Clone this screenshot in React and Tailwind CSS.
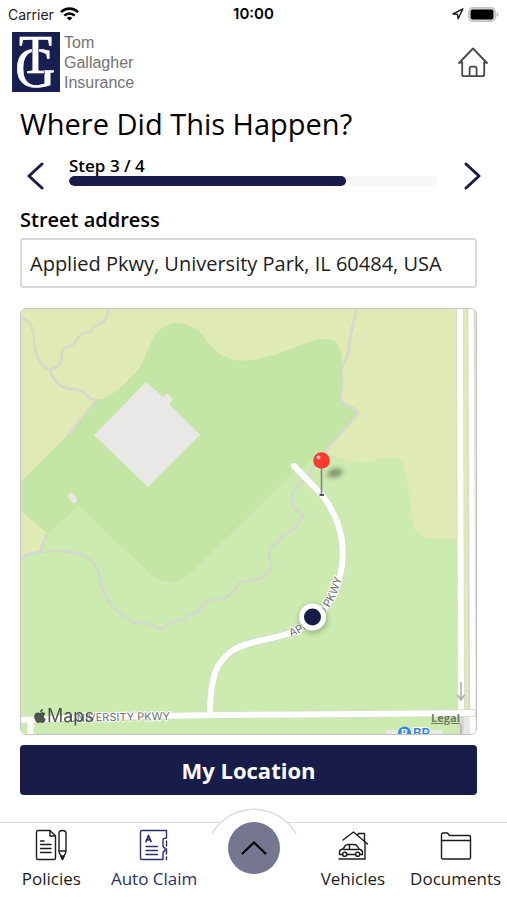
import {useState} from 'react';
import {FaApple} from 'react-icons/fa';

const TRAILS = [
  'M22 317 Q33 324 34 336 Q33 352 41 363 Q45 369 50 370 Q54 381 60 385 Q66 389 80 390 Q87 394 89 398 L96 400 L67 437',
  'M108 308 Q109 320 100 324 Q94 325 90 332 Q80 333 78 338 Q74 345 70 346 Q61 348 62 353 Q63 366 50 370',
  'M357 308 L354 320 L352 328 L350 340 L348 354 L341 370 Q344 385 340 399 Q343 405 353 408 Q361 413 354 418 L326 450 L312 470 Q296 487 293 493 Q289 505 297 511 Q305 514 302 519 Q292 532 283 535 Q279 544 272 546 Q267 550 270 560 Q273 568 264 576 Q257 581 242 581 Q238 583 235 589 Q230 598 222 599 Q208 600 205 603 L199 611 Q195 615 189 615 Q185 620 180 620 Q170 621 166 626 Q160 631 154 626 Q148 623 135 623 Q122 617 112 606 Q102 595 100 578 Q98 564 86 557 Q72 550 55 551 Q30 551 22 558',
  'M40 551 L47 534',
];

const APPLIED_PKWY = 'M294 466 L322 495 C347 528 348 562 333 596 C321 618 306 629 287 634 C268 640 250 641 235 649 C216 660 210 678 210 715';

export default function App() {
  return (
    <div className="flex min-h-screen flex-col bg-white font-['Open_Sans',sans-serif] text-black">
      <StatusBar />
      <Header />
      <main className="flex flex-col pr-[30px] pl-5">
        <h1 className="mt-3 text-[29px] leading-10">Where Did This Happen?</h1>
        <StepProgress step={3} total={4} />
        <AddressField />
        <LocationMap />
        <button type="button" className="mt-2.5 h-[50px] rounded bg-[#171c48] text-[22px] font-bold text-white">
          My Location
        </button>
      </main>
      <TabBar />
    </div>
  );
}

function StatusBar() {
  return (
    <div className="grid h-7 grid-cols-3 items-center px-2 font-['Inter',sans-serif] text-[14px]">
      <div className="flex items-center gap-1.5 text-[#222]">
        <span>Carrier</span>
        <svg viewBox="0 0 19 14" className="h-3.5 w-[19px]" fill="none" stroke="#000" strokeWidth="2.6">
          <path d="M1 5.2 C5.8 0.4 13.2 0.4 18 5.2" />
          <path d="M4.3 8.6 C7.3 5.7 11.7 5.7 14.7 8.6" />
          <path d="M9.5 13.6 L6.8 10.9 Q9.5 8.8 12.2 10.9 Z" fill="#000" stroke="none" />
        </svg>
      </div>
      <span className="text-center text-[15px] font-semibold">10:00</span>
      <div className="flex items-center justify-end gap-1">
        <svg viewBox="0 0 12 12" className="h-3 w-3" fill="none" stroke="#222" strokeWidth="1.5" strokeLinejoin="round">
          <path d="M10.8 1 L1 5.9 L5.4 6.3 L6.2 10.8 Z" />
        </svg>
        <svg viewBox="0 0 31 15" className="h-[15px] w-[31px]">
          <rect x="0.8" y="0.8" width="26.4" height="13.4" rx="4" fill="#d8d8d8" stroke="#c4c4c4" strokeWidth="1.6" />
          <rect x="2.6" y="2.6" width="22.8" height="9.8" rx="2" fill="#000" />
          <path d="M28.6 5 Q30.4 6 30.4 7.5 Q30.4 9 28.6 10 Z" fill="#b9b9b9" />
        </svg>
      </div>
    </div>
  );
}

function Header() {
  return (
    <header className="flex h-16 items-start justify-between pt-1 pr-[18px] pl-3">
      <div className="flex items-start gap-1">
        <svg viewBox="0 0 48 60" className="h-[60px] w-12 overflow-visible" fontFamily="Liberation Serif, serif" fill="#fff">
          <rect width="48" height="60" fill="#171f50" />
          <text x="3" y="55" fontSize="56" stroke="#fff" strokeWidth="0.5">G</text>
          <text x="7" y="41" fontSize="54" stroke="#171f50" strokeWidth="2" paintOrder="stroke">T</text>
          <text x="7" y="41" fontSize="54" stroke="#fff" strokeWidth="0.6">T</text>
        </svg>
        <p className="w-20 pt-px font-['Liberation_Sans',sans-serif] text-[16px] leading-5 text-[#737373]">
          Tom Gallagher Insurance
        </p>
      </div>
      <button type="button" aria-label="Home" className="mt-3.5">
        <svg viewBox="0 0 32 32" className="h-8 w-8" fill="none" stroke="#484848" strokeWidth="1.8" strokeLinecap="round" strokeLinejoin="round">
          <path d="M2 17 L16 2.5 L30 17 L27.2 16.2 V28.5 Q27.2 30.2 25.5 30.2 H7 Q5.2 30.2 5.2 28.5 V16.2 Z" />
          <path d="M12.6 30 V22.5 Q12.6 20.6 14.4 20.6 H17.8 Q19.6 20.6 19.6 22.5 V30" />
        </svg>
      </button>
    </header>
  );
}

function StepProgress({step, total}) {
  return (
    <div className="mt-3 -mr-2 flex items-end justify-between">
      <button type="button" aria-label="Previous step" className="pl-1.5">
        <Chevron d="M16 2 L3 14 L16 26" />
      </button>
      <div className="mx-[25px] flex flex-1 flex-col pb-1">
        <span id="step-label" className="text-[17px] leading-5 font-semibold">
          Step {step} / {total}
        </span>
        <div
          role="progressbar"
          aria-labelledby="step-label"
          aria-valuenow={step}
          aria-valuemax={total}
          className="h-2.5 overflow-hidden rounded-full bg-[#f7f7f8]"
        >
          <div className="h-full rounded-full bg-[#171c48]" style={{width: `${(step / total) * 100}%`}} />
        </div>
      </div>
      <button type="button" aria-label="Next step" className="pr-1">
        <Chevron d="M3 2 L16 14 L3 26" />
      </button>
    </div>
  );
}

function Chevron({d}) {
  return (
    <svg viewBox="0 0 18 28" className="h-7 w-[18px]" fill="none" stroke="#171c48" strokeWidth="3" strokeLinecap="round" strokeLinejoin="round">
      <path d={d} />
    </svg>
  );
}

function AddressField() {
  const [address, setAddress] = useState('Applied Pkwy, University Park, IL 60484, USA');

  return (
    <div className="mt-4 flex flex-col">
      <label htmlFor="street-address" className="text-[20px] leading-7 font-semibold">
        Street address
      </label>
      <input
        id="street-address"
        type="text"
        value={address}
        onChange={(e) => setAddress(e.target.value)}
        className="mt-1 h-[50px] rounded-[3px] border-2 border-[#dadada] px-2 text-[20px] text-[#1c1c1c]"
      />
    </div>
  );
}

function LocationMap() {
  return (
    <div className="relative mt-5 overflow-hidden rounded-md border border-[#c4c4c4]">
      <svg viewBox="21 309 455 425" className="block w-full" fill="none">
        <defs>
          <path id="pkwy-label" d="M291 637 C311 629 326 615 332 603 C337 594 340 585 344 572" />
          <filter id="soft" x="-50%" y="-80%" width="200%" height="260%">
            <feGaussianBlur stdDeviation="2.5" />
          </filter>
        </defs>

        <rect x="20" y="305" width="460" height="435" fill="#e0eab5" />
        <path
          d="M20 558 L40 551 L48 534 L80 506 L200 440 L326 451 C338 462 362 464 376 460 C393 456 402 457 404 466 C408 482 410 500 412 520 C414 534 424 539 436 539 H461 V740 H20 Z"
          fill="#cdebb0"
        />
        <path
          d="M20 483 L65 438 L97 400 C115 397 128 379 139 369 C148 355 152 323 177 323 C201 325 204 339 215 350 C227 362 249 363 265 357 C291 352 307 339 326 339 C339 339 344 351 341 370 Q344 385 340 399 L357 413 L326 451 L290 476 L194 570 Q171 592 149 573 L79 506 L48 534 L20 510 Z"
          fill="#c3e6a4"
        />
        <path d="M79 506 L64 520 L48 534 L80 540 L100 526 Z" fill="#cdebb0" />
        <path d="M146 382 L163 397 L167 393 L173 399 L169 404 L200 435 L148 487 L94 435 Z" fill="#e8e8e7" />
        <path d="M71 496 L74 500" stroke="#e8e8e7" strokeWidth="6" strokeLinecap="round" />

        {TRAILS.map((d) => (
          <g key={d}>
            <path d={d} stroke="#c9cdc1" strokeWidth="2.2" />
            <path d={d} stroke="#dcdcd8" strokeWidth="1.3" />
          </g>
        ))}

        <path d="M460 305 L461 740" stroke="#d5dacb" strokeWidth="7.5" />
        <path d="M471 305 L472 740" stroke="#d5dacb" strokeWidth="7.5" />
        <rect x="464" y="712" width="8" height="26" fill="#e6e6e2" />
        <path d="M460 305 L461 716" stroke="#fff" strokeWidth="6" />
        <path d="M471 305 L473 740" stroke="#fff" strokeWidth="5.5" />
        <path d="M461 724 V740" stroke="#a9a9a4" strokeWidth="1.2" />

        <path d={APPLIED_PKWY} stroke="#d3ddc5" strokeWidth="7.5" />
        <path d="M20 720 Q130 715 300 714.500 L477 713" stroke="#d3ddc5" strokeWidth="7.5" />
        <path d={APPLIED_PKWY} stroke="#fff" strokeWidth="6" strokeLinecap="round" />
        <path d="M20 720 Q130 715 300 714.500 L475 713 M30.500 720 V740" stroke="#fff" strokeWidth="6" />
        <path d="M461 682 V698 M457.500 695 L461 700 L464.500 695" stroke="#a8a8a8" strokeWidth="1.5" />

        <g fontFamily="Inter, sans-serif" fontSize="11" fill="#6d6d6d" stroke="#fff" strokeWidth="2" paintOrder="stroke">
          <text x="170" y="720" textAnchor="end" transform="rotate(-1 170 720)">
            UNIVERSITY PKWY
          </text>
          <text>
            <textPath href="#pkwy-label">APPLIED PKWY</textPath>
          </text>
        </g>

        <rect x="386" y="730" width="57" height="10" rx="2" fill="#e9e9e4" />
        <circle cx="404.500" cy="733" r="6.500" fill="#2f86e8" />
        <text x="401" y="737" fontFamily="Inter, sans-serif" fontSize="10" fontWeight="700" fill="#fff">P</text>
        <text x="413" y="738" fontFamily="Inter, sans-serif" fontSize="13" fontWeight="600" fill="#2f86e8" stroke="#fff" strokeWidth="2" paintOrder="stroke">
          BP
        </text>

        <ellipse cx="335" cy="473" rx="8" ry="4" transform="rotate(-12 335 473)" fill="#5f7050" opacity="0.75" filter="url(#soft)" />
        <path d="M321.500 468 V494" stroke="#85858a" strokeWidth="1.6" />
        <path d="M319.500 495 H324" stroke="#55555c" strokeWidth="2" />
        <circle cx="321.500" cy="460.500" r="8.300" fill="#fc3b30" />
        <circle cx="318.500" cy="457.500" r="2" fill="#ffc4be" />

        <circle cx="313" cy="619" r="15" fill="#5f7a4a" opacity="0.4" filter="url(#soft)" />
        <circle cx="312.500" cy="617" r="13.500" fill="#fff" />
        <circle cx="312.500" cy="617" r="8.500" fill="#171c48" />
      </svg>

      <div className="absolute bottom-1.5 left-3 flex items-center font-['Inter',sans-serif] text-[18px] leading-6 text-[#3c463a] opacity-90">
        <FaApple className="h-4 w-3.5" />
        <span>Maps</span>
      </div>
      <a href="#legal" className="absolute right-4 bottom-2 text-[11px] font-bold text-[#6f7b66] underline">
        Legal
      </a>
    </div>
  );
}

function TabBar() {
  return (
    <nav className="relative mt-auto grid h-[78px] grid-cols-[1fr_1fr_96px_1fr_1fr] border-t border-[#dcdcdc] bg-white">
      <Tab label="Policies" icon={<PoliciesIcon />} />
      <Tab label="Auto Claim" icon={<AutoClaimIcon />} active />
      <div className="relative flex justify-center">
        <svg viewBox="0 0 88 40" className="absolute -top-[15px] h-10 w-[88px]" fill="none">
          <path d="M2 26 A48 48 0 0 1 86 26 V40 H2 Z" fill="#fff" />
          <path d="M2 26 A48 48 0 0 1 86 26" stroke="#dcdcdc" strokeWidth="1.5" />
        </svg>
        <button type="button" aria-label="Open menu" className="relative -mt-px flex h-[52px] w-[52px] items-center justify-center rounded-full bg-[#74778f]">
          <svg viewBox="0 0 28 16" className="h-4 w-7" fill="none" stroke="#000" strokeWidth="2.2">
            <path d="M2 14 L14 2.500 L26 14" />
          </svg>
        </button>
      </div>
      <Tab label="Vehicles" icon={<VehiclesIcon />} />
      <Tab label="Documents" icon={<DocumentsIcon />} />
    </nav>
  );
}

function Tab({label, icon, active}) {
  return (
    <a
      href={`#${label.toLowerCase().replace(' ', '-')}`}
      aria-current={active ? 'page' : undefined}
      className={`flex flex-col items-center pt-1.5 ${active ? 'text-[#2c2f6b]' : 'text-[#1c1c1c]'}`}
    >
      {icon}
      <span className="mt-1.5 text-[17px] leading-6 whitespace-nowrap">{label}</span>
    </a>
  );
}

function TabIcon({children}) {
  return (
    <svg viewBox="0 0 32 32" className="h-8 w-8" fill="none" stroke="currentColor" strokeWidth="1.4" strokeLinecap="round" strokeLinejoin="round">
      {children}
    </svg>
  );
}

function PoliciesIcon() {
  return (
    <TabIcon>
      <path d="M15 1.500 H3 Q1.500 1.500 1.500 3 V29 Q1.500 30.500 3 30.500 H19 Q20.500 30.500 20.500 29 V7 Z" />
      <path d="M15 1.500 V7 H20.500" />
      <path d="M5.500 12 H9 M5.500 15.500 H16 M5.500 19.500 H16 M5.500 23.500 H16" />
      <path d="M24 4 Q24 1.500 27.500 1.500 Q31 1.500 31 4 V23 L27.500 30.500 L24 23 Z M24 22 H31" />
      <path d="M26 27 H29 L27.500 30.500 Z" fill="currentColor" />
    </TabIcon>
  );
}

function AutoClaimIcon() {
  return (
    <TabIcon>
      <path d="M28.500 9 V1.500 H4 Q2.500 1.500 2.500 3 V29 Q2.500 30.500 4 30.500 H25 V24 Q25 22 27 22 V19 Q25 19 25 16 V11 Q25 9 28.500 9" />
      <path d="M28.500 12 V17 M28 20 H28.500 V25 M28.500 28 V30.500" />
      <path d="M8 12.500 L10.500 6.500 L13 12.500 M9 10.800 H12" strokeWidth="1.8" />
      <path d="M8 17.500 H19.500 M8 21.500 H19.500 M8 25.500 H19.500" />
    </TabIcon>
  );
}

function VehiclesIcon() {
  return (
    <TabIcon>
      <path d="M6 11 L16.500 3 L30.500 15" />
      <path d="M20.500 6 L21.500 4.500 H27.500 V12 M28 13 V30 H2" />
      <path d="M2.500 25.500 V22.500 Q3 20.500 6 20 L8 17 Q9 15.500 11 15.500 H17 Q19.500 15.500 20.500 17.500 L22 20 Q25.500 21 25.500 23.500 V25.500 H23 M2.500 25.500 H5.500 M10 25.500 H18.500 M7 20.500 H21 M12.500 15.500 V20.500" />
      <circle cx="7.700" cy="25.300" r="2.100" />
      <circle cx="20.700" cy="25.300" r="2.100" />
    </TabIcon>
  );
}

function DocumentsIcon() {
  return (
    <TabIcon>
      <path d="M1.500 28.500 V5.500 Q1.500 4 3 4 H7.500 L9.500 6.500 H29 Q30.500 6.500 30.500 8 V28.500 Q30.500 30 29 30 H3 Q1.500 30 1.500 28.500 Z" />
      <path d="M1.500 11.500 H30.500" />
    </TabIcon>
  );
}
